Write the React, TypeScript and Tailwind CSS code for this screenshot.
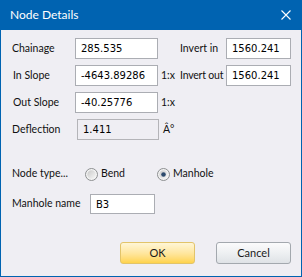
import React from "react";

const ui = { fontFamily: '"Segoe UI", Lato, "Noto Sans", sans-serif' };
const mono = { fontFamily: '"DejaVu Sans", Tahoma, sans-serif' };

function TextBox({ value, w, readOnly }: { value: string; w: string; readOnly?: boolean }) {
  return (
    <div
      className={`${w} h-full shrink-0 flex items-center pl-[5px] text-[10px] text-black border ${
        readOnly ? "bg-[#efeef3] border-[#b4b4b8]" : "bg-white border-[#abadb3]"
      }`}
      style={mono}
    >
      {value}
    </div>
  );
}

function Radio({ checked, label }: { checked?: boolean; label: string }) {
  return (
    <div className="flex items-center gap-[3px]">
      <svg width="13" height="13" viewBox="0 0 13 13">
        <defs>
          <linearGradient id={`rg-${label}`} x1="0" y1="0" x2="1" y2="1">
            <stop offset="0" stopColor="#c9c9c9" />
            <stop offset="1" stopColor="#f7f7f7" />
          </linearGradient>
        </defs>
        <circle cx="6.5" cy="6.5" r="6" fill="#f3f3f3" stroke="#8d8f91" />
        <circle cx="6.5" cy="6.5" r="4.2" fill={`url(#rg-${label})`} />
        {checked && <circle cx="6.5" cy="6.5" r="2.3" fill="#2d4a6c" />}
      </svg>
      <span>{label}</span>
    </div>
  );
}

export default function App() {
  return (
    <div className="w-[302px] h-[277px] flex flex-col text-[10.5px] text-[#111] whitespace-nowrap" style={ui}>
      <div className="h-[30px] bg-[#0063b1] flex items-center justify-between pl-[10px] pr-[11px] shrink-0">
        <span className="text-white text-[12px]">Node Details</span>
        <svg width="10" height="10" viewBox="0 0 10 10">
          <path d="M0.5 0.5 L9.5 9.5 M9.5 0.5 L0.5 9.5" stroke="white" strokeWidth="1.1" />
        </svg>
      </div>

      <div className="flex-1 bg-[#efeef3] border-x border-b border-[#0063b1] pl-[11px] pt-[8px] flex flex-col">
        <div className="flex flex-col gap-[6px]">
          <div className="h-[21px] flex items-center">
            <span className="w-[63px]">Chainage</span>
            <TextBox value="285.535" w="w-[83px]" />
            <span className="w-[22px]" />
            <span className="w-[46px]">Invert in</span>
            <TextBox value="1560.241" w="w-[65px]" />
          </div>
          <div className="h-[21px] flex items-center">
            <span className="w-[63px] pl-px">In Slope</span>
            <TextBox value="-4643.89286" w="w-[83px]" />
            <span className="w-[22px] pl-[3px]">1:x</span>
            <span className="w-[46px] tracking-[-0.2px]">Invert out</span>
            <TextBox value="1560.241" w="w-[65px]" />
          </div>
          <div className="h-[21px] flex items-center">
            <span className="w-[63px] pl-px">Out Slope</span>
            <TextBox value="-40.25776" w="w-[83px]" />
            <span className="w-[22px] pl-[3px]">1:x</span>
          </div>
          <div className="h-[21px] flex items-center">
            <span className="w-[65px]">Deflection</span>
            <TextBox value="1.411" w="w-[82px]" readOnly />
            <span className="pl-[4px]">Â°</span>
          </div>
        </div>

        <div className="h-[16px] mt-[26px] flex items-center">
          <span className="w-[73px]">Node type...</span>
          <div className="w-[72px]">
            <Radio label="Bend" />
          </div>
          <Radio label="Manhole" checked />
        </div>

        <div className="h-[20px] mt-[12px] flex items-center">
          <span className="w-[78px]">Manhole name</span>
          <TextBox value="B3" w="w-[65px]" />
        </div>

        <div className="mt-[28px] flex justify-end gap-[21px] pr-[10px]">
          <button className="w-[75px] h-[22px] rounded-[3px] border border-[#e2c46a] bg-gradient-to-b from-[#fff6d6] via-[#ffe7a0] to-[#ffd34a] text-[#1a1a1a] text-[11px]">
            OK
          </button>
          <button className="w-[75px] h-[22px] rounded-[3px] border border-[#a3a8ae] bg-gradient-to-b from-[#fbfbfc] via-[#eef0f2] to-[#dfe2e6] text-[#1a1a1a] text-[11px]">
            Cancel
          </button>
        </div>
      </div>
    </div>
  );
}
